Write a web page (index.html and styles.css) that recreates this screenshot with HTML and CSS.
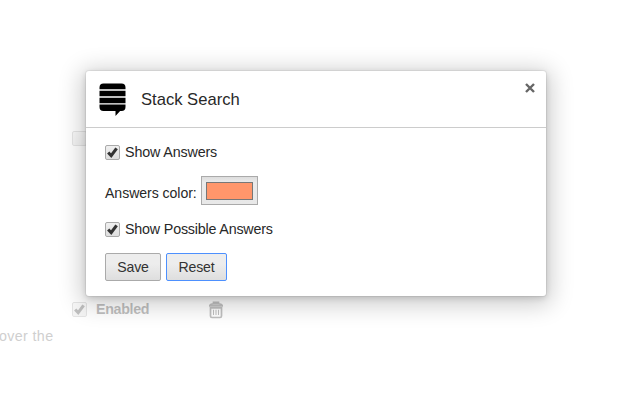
FILE: index.html
```
<!DOCTYPE html>
<html lang="en">
<head>
<meta charset="utf-8">
<title>Stack Search</title>
<link rel="stylesheet" href="styles.css">
</head>
<body>
<main class="page">
  <div class="extension-row"><span class="box"></span></div>
  <div class="extension-row enabled-row">
    <span class="box"><svg class="tick" viewBox="0 0 15 15"><path d="M3.2 7.5 6.2 10.7 11.6 3.4"/></svg></span>
    <strong class="enabled-label">Enabled</strong>
    <svg class="trash" viewBox="0 0 16 18"><path d="M1 4.8h14M1.8 4C2.6 3 4 2.8 5.5 2.8h5c1.5 0 2.9.2 3.7 1.2M5.5 2.5V1.3h5v1.2M2.5 6.8V15q0 1.5 1.5 1.5h8q1.5 0 1.5-1.5V6.8z"/><path class="thin" d="M5.5 8.8v5.2M8 8.8v5.2M10.5 8.8v5.2"/></svg>
  </div>
  <p class="description">over the</p>
</main>
<section class="dialog">
  <header class="dialog-header">
    <svg class="logo" viewBox="0 0 28 34"><path d="M4.5 .5h18q4 0 4 4v1.8H.5V4.5q0-4 4-4zM.5 7.7h26v5.6H.5zM.5 14.7h26v5.6H.5zM.5 21.6h26V24q0 4-4 4h-1.4L16.5 33v-5h-12q-4 0-4-4z"/></svg>
    <h1 class="title">Stack Search</h1>
    <svg class="close" viewBox="0 0 10 10"><path d="M1 1 9 9M9 1 1 9"/></svg>
  </header>
  <div class="dialog-body">
    <label class="option"><span class="box"><svg class="tick" viewBox="0 0 15 15"><path d="M3.2 7.5 6.2 10.7 11.6 3.4"/></svg></span><span class="answers">Show Answers</span></label>
    <div class="color-row"><span class="color-label">Answers color:</span><span class="color-well"><span class="swatch"></span></span></div>
    <label class="option"><span class="box"><svg class="tick" viewBox="0 0 15 15"><path d="M3.2 7.5 6.2 10.7 11.6 3.4"/></svg></span><span class="possible">Show Possible Answers</span></label>
    <div class="actions"><button class="button save">Save</button><button class="button reset">Reset</button></div>
  </div>
</section>
</body>
</html>
```
FILE: styles.css
```
* { box-sizing: border-box; }
body {
  margin: 0;
  height: 400px;
  overflow: hidden;
  background: #fff;
  color: #282828;
  font: 14px/18px "Liberation Sans", Arial, sans-serif;
}
.page { padding-top: 131px; }
.extension-row { display: flex; height: 16px; padding-left: 72px; opacity: .3; }
.enabled-row { align-items: center; height: 20px; margin-top: 152px; }
.enabled-label { width: 112px; margin-left: 9px; color: #303030; font-size: 14.3px; letter-spacing: -.35px; }
.trash { width: 16px; height: 18px; margin-top: 2px; fill: none; stroke: #333; stroke-width: 1.7; }
.trash .thin { stroke-width: 1; }
.description { margin: 8px 0 0 -1px; color: #cfcfcf; font-size: 14.3px; letter-spacing: .35px; }
.box {
  display: block;
  flex: none;
  width: 15px;
  height: 15px;
  border: 1px solid #aaa;
  border-radius: 2px;
  background: linear-gradient(#f0f0f0, #dedede);
}
.tick { display: block; width: 15px; height: 15px; margin: -1px; fill: none; stroke: #333; stroke-width: 3.1; }
.dialog {
  position: absolute;
  top: 71px;
  left: 86px;
  width: 460px;
  height: 225px;
  border-radius: 3px;
  background: #fff;
  box-shadow: 0 4px 23px 5px rgba(0,0,0,.2), 0 2px 6px rgba(0,0,0,.15), 0 0 0 1px rgba(0,0,0,.05);
}
.dialog-header { display: flex; height: 57px; padding: 11.5px 11px 0 13px; border-bottom: 1px solid #ccc; }
.logo { width: 28px; height: 34px; fill: #000; }
.title { flex: 1; margin: 8.5px 0 0 14px; font-size: 16.6px; font-weight: 400; line-height: 18px; }
.close { width: 10px; height: 10px; fill: none; stroke: #666; stroke-width: 2.4; }
.dialog-body { padding: 15px 19px 0; }
.option { display: flex; gap: 5px; height: 18px; font-size: 14.3px; }
.option .box { margin-top: 2px; }
.answers { letter-spacing: -.14px; }
.possible { letter-spacing: -.19px; }
.color-row { display: flex; height: 29px; margin: 15px 0; font-size: 14.1px; }
.color-label { width: 96px; padding-top: 8px; letter-spacing: -.05px; white-space: nowrap; }
.color-well { width: 57px; height: 29px; padding: 5px 4px 4px; border: 1px solid #aaa; background: linear-gradient(#ddd, #eaeaea 20%, #e8e8e8); }
.swatch { display: block; height: 18px; border: 1px solid #777; background: #ff966b; }
.actions { display: flex; gap: 5px; margin-top: 15px; }
.button {
  height: 28px;
  padding: 0;
  border: 1px solid #aaa;
  border-radius: 2px;
  background: linear-gradient(#ededed 38%, #dedede);
  color: #333;
  font: 14.1px/18px "Liberation Sans", Arial, sans-serif;
  letter-spacing: -.15px;
}
.save { width: 56px; }
.reset { width: 61px; border-color: #4d90fe; }
```
